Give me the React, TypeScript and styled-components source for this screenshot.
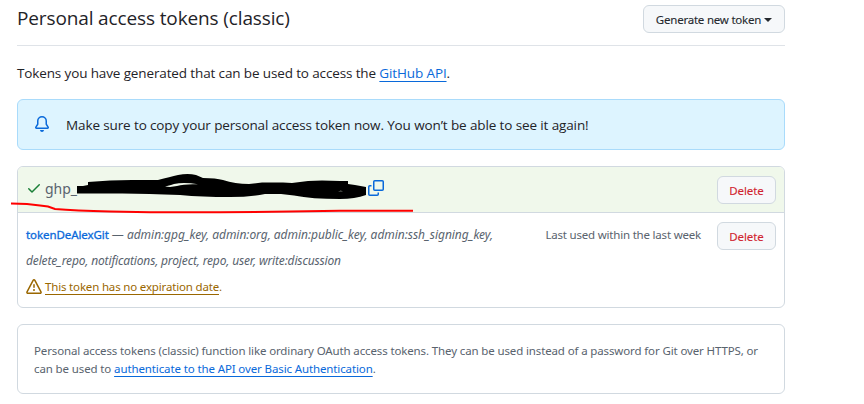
import React from "react";
import styled, { createGlobalStyle } from "styled-components";

const Global = createGlobalStyle`
  * { box-sizing: border-box; }
  body { margin: 0; background: #fff; color: #1f2328; overflow: hidden; }
`;

const ui = `"Open Sans", "Noto Sans", sans-serif`;
const small = `"Noto Sans", "Open Sans", sans-serif`;

const Page = styled.main`
  width: 768px;
  margin-left: 17px;
  font: 13.5px/21px ${ui};
`;

const Header = styled.header`
  display: flex;
  justify-content: space-between;
  align-items: flex-start;
  height: 46px;
  padding-top: 5px;
  border-bottom: 1px solid #dfe3e8;
`;

const Title = styled.h1`
  margin: -1px 0 0;
  font: 400 19px/28px ${ui};
`;

const Text = styled.span<{ $track?: number }>`
  white-space: nowrap;
  letter-spacing: ${(p) => p.$track ?? 0}px;
`;

const Button = styled.button<{ $danger?: boolean }>`
  display: inline-flex;
  align-items: center;
  justify-content: center;
  flex: none;
  gap: 3px;
  height: 28px;
  width: ${(p) => (p.$danger ? 59 : 142)}px;
  padding: 2px 0 0;
  border: 1px solid #d1d9e0;
  border-radius: 6px;
  background: #f6f8fa;
  color: ${(p) => (p.$danger ? "#d1242f" : "#25292e")};
  font: 400 11.5px/20px ${small};
  -webkit-text-stroke: 0.1px currentColor;
`;

const Caret = styled.i`
  border: 4px solid transparent;
  border-top-color: currentColor;
  border-bottom: 0;
`;

const Intro = styled.p`
  margin: 17px 0 15px;
  line-height: 21px;
`;

const Link = styled.a<{ $warn?: boolean }>`
  color: ${(p) => (p.$warn ? "#9a6700" : "#0969da")};
  text-decoration: underline;
  text-underline-offset: 3px;
  text-decoration-thickness: 1px;
  text-decoration-skip-ink: none;
`;

const Banner = styled.section`
  display: flex;
  align-items: center;
  gap: 16px;
  height: 51px;
  padding: 1px 17px 0 16px;
  border: 1px solid #a9dbfb;
  border-radius: 6px;
  background: #ddf4ff;
  svg { margin-top: -2px; }
`;

const TokenList = styled.section`
  position: relative;
  height: 142px;
  margin-top: 16px;
  border: 1px solid #d1d9e0;
  border-radius: 6px;
`;

const NewToken = styled.div`
  display: flex;
  align-items: center;
  height: 46px;
  padding: 0 8px;
  border-bottom: 1px solid #d1d9e0;
  border-radius: 5px 5px 0 0;
  background: #f0f8eb;
  color: #59636e;
  svg { margin-top: -3px; }
`;

const Secret = styled.code`
  flex: 1;
  margin: -2px 0 0 3px;
  font: 14px/20px ${small};
`;

const TokenRow = styled.div`
  display: flex;
  align-items: flex-start;
  padding: 9px 8px 0;
  color: #59636e;
  font: 11.5px/26px ${small};
`;

const Details = styled.div`
  display: flex;
  flex-direction: column;
  flex: 1;
`;

const Scopes = styled.div`
  font-size: 12px;
  white-space: nowrap;
  letter-spacing: -0.03px;
`;

const TokenName = styled.a`
  color: #0969da;
  font-size: 11.5px;
  letter-spacing: -0.08px;
  -webkit-text-stroke: 0.3px currentColor;
`;

const Warning = styled.div`
  display: flex;
  align-items: center;
  gap: 3px;
  color: #9a6700;
  svg { margin-top: -1px; }
`;

const LastUsed = styled.div`
  margin-right: 16px;
`;

const Note = styled.section`
  display: flex;
  flex-direction: column;
  height: 70px;
  margin-top: 16px;
  padding: 17px 16px 0;
  border: 1px solid #d1d9e0;
  border-radius: 6px;
  color: #59636e;
  font: 11.5px/18px ${small};
`;

const Marks = styled.svg`
  position: absolute;
  left: -18px;
  top: 0;
  pointer-events: none;
`;

const Icon = ({ d, color, size = 16 }: { d: string; color: string; size?: number }) => (
  <svg width={size} height={size} viewBox="0 0 16 16" fill={color}>
    <path d={d} />
  </svg>
);

const bell =
  "M8 16a2 2 0 0 0 1.985-1.75c.017-.137-.097-.25-.235-.25h-3.5c-.138 0-.252.113-.235.25A2 2 0 0 0 8 16ZM3 5a5 5 0 0 1 10 0v2.947c0 .05.015.098.042.139l1.703 2.555A1.519 1.519 0 0 1 13.482 13H2.518a1.516 1.516 0 0 1-1.263-2.36l1.703-2.554A.255.255 0 0 0 3 7.947Zm5-3.5A3.5 3.5 0 0 0 4.5 5v2.947c0 .346-.102.683-.294.97l-1.703 2.556a.017.017 0 0 0-.003.01l.001.006c0 .002.002.004.004.006l.006.004.007.001h10.964l.007-.001.006-.004.004-.006.001-.007a.017.017 0 0 0-.003-.01l-1.703-2.554a1.745 1.745 0 0 1-.294-.97V5A3.5 3.5 0 0 0 8 1.5Z";
const check =
  "M13.78 4.22a.75.75 0 0 1 0 1.06l-7.25 7.25a.75.75 0 0 1-1.06 0L2.22 9.28a.751.751 0 0 1 .018-1.042.751.751 0 0 1 1.042-.018L6 10.94l6.72-6.72a.75.75 0 0 1 1.06 0Z";
const alert =
  "M6.457 1.047c.659-1.234 2.427-1.234 3.086 0l6.082 11.378A1.75 1.75 0 0 1 14.082 15H1.918a1.75 1.75 0 0 1-1.543-2.575Zm1.763.707a.25.25 0 0 0-.44 0L1.698 13.132a.25.25 0 0 0 .22.368h12.164a.25.25 0 0 0 .22-.368Zm.53 3.996v2.5a.75.75 0 0 1-1.5 0v-2.5a.75.75 0 0 1 1.5 0ZM9 11a1 1 0 1 1-2 0 1 1 0 0 1 2 0Z";

export default function App() {
  return (
    <>
      <Global />
      <Page>
        <Header>
          <Title><Text $track={-0.13}>Personal access tokens (classic)</Text></Title>
          <Button><Text $track={-0.22}>Generate new token</Text><Caret /></Button>
        </Header>
        <Intro>
          <Text $track={-0.13}>
            Tokens you have generated that can be used to access the <Link>GitHub API</Link>.
          </Text>
        </Intro>
        <Banner>
          <Icon d={bell} color="#0969da" />
          <Text $track={-0.12}>Make sure to copy your personal access token now. You won’t be able to see it again!</Text>
        </Banner>
        <TokenList>
          <NewToken>
            <Icon d={check} color="#1a7f37" />
            <Secret><Text>ghp_</Text></Secret>
            <Button $danger><Text $track={-0.1}>Delete</Text></Button>
          </NewToken>
          <TokenRow>
            <Details>
              <Scopes>
                <TokenName>tokenDeAlexGit</TokenName> — <em>admin:gpg_key, admin:org, admin:public_key, admin:ssh_signing_key,</em>
              </Scopes>
              <Scopes><Text $track={-0.15}><em>delete_repo, notifications, project, repo, user, write:discussion</em></Text></Scopes>
              <Warning>
                <Icon d={alert} color="#9a6700" />
                <Text $track={-0.17}><Link $warn>This token has no expiration date</Link>.</Text>
              </Warning>
            </Details>
            <LastUsed><Text $track={-0.2}>Last used within the last week</Text></LastUsed>
            <Button $danger><Text $track={-0.1}>Delete</Text></Button>
          </TokenRow>
          <Marks width="440" height="60" viewBox="0 167 440 60">
            <g fill="none" stroke="#0969da" strokeWidth="1.5">
              <rect x="373.75" y="180.75" width="9.5" height="9.5" rx="1" />
              <path d="M371.5 185.75h-1.75a1 1 0 0 0-1 1v7.5a1 1 0 0 0 1 1h7.5a1 1 0 0 0 1-1v-1.75" />
            </g>
            <path d="M77 186H83L88 185V182Q110 180 132 180H158Q170 177 178 175Q188 173 196 175L203 178Q216 178 223 180Q235 184 249 184L262 182.500H283L292 183L308 181L322 180.500L340 181H348V184L355 185L366 187V195Q355 199 340 199Q312 199 294 195.500L281 194H265Q250 197 230 197Q202 197 180 195Q140 193 110 193.500H77Z" fill="#000" />
            <path d="M165 186.500L171 185L174 184Q184 182 198 184.300Q185 183.600 177 186L170 187ZM338 191.300Q341 190.300 343 191.300Z" fill="#f0f8eb" />
            <path d="M11 203.500L27 204L40 205.500L48 206.500L55 209Q75 210.500 110 211.500L150 212.300H220L290 211.500L340 210.800H413" fill="none" stroke="#ff0000" strokeWidth="2" />
          </Marks>
        </TokenList>
        <Note>
          <Text $track={-0.13}>Personal access tokens (classic) function like ordinary OAuth access tokens. They can be used instead of a password for Git over HTTPS, or</Text>
          <Text $track={-0.12}>can be used to <Link>authenticate to the API over Basic Authentication</Link>.</Text>
        </Note>
      </Page>
    </>
  );
}
